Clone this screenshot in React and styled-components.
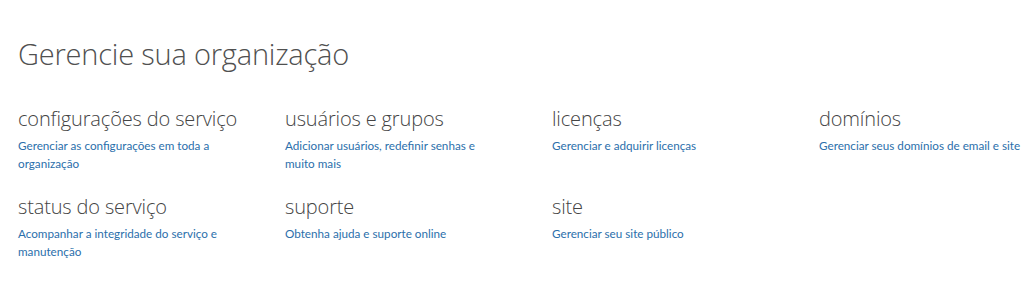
import styled, { createGlobalStyle } from 'styled-components'

const GlobalStyle = createGlobalStyle`
  body {
    margin: 0;
    background: #fff;
    font-family: 'Open Sans', 'Noto Sans', sans-serif;
  }
`

const Page = styled.div`
  padding: 34px 0 0 18px;
`

const Title = styled.h1`
  margin: 0 0 33px;
  font-size: 29px;
  font-weight: 300;
  line-height: 40px;
  color: #505050;
  letter-spacing: -0.2px;
`

const Grid = styled.div`
  display: grid;
  grid-template-columns: repeat(3, 267px) 1fr;
  row-gap: 23px;
`

const Item = styled.div`
  display: flex;
  flex-direction: column;
  min-width: 0;
`

const Heading = styled.h2`
  margin: 0;
  font-size: 20px;
  font-weight: 300;
  line-height: 24px;
  color: #444;
  letter-spacing: -0.15px;
`

const Link = styled.a`
  margin-top: 5px;
  max-width: 212px;
  font-family: 'Lato', 'Open Sans', sans-serif;
  font-size: 11.7px;
  line-height: 18px;
  color: #2b6fab;
  text-decoration: none;
  cursor: pointer;
`

const items = [
  ['configurações do serviço', 'Gerenciar as configurações em toda a organização'],
  ['usuários e grupos', 'Adicionar usuários, redefinir senhas e muito mais'],
  ['licenças', 'Gerenciar e adquirir licenças'],
  ['domínios', 'Gerenciar seus domínios de email e site'],
  ['status do serviço', 'Acompanhar a integridade do serviço e manutenção'],
  ['suporte', 'Obtenha ajuda e suporte online'],
  ['site', 'Gerenciar seu site público'],
]

export default function App() {
  return (
    <Page>
      <GlobalStyle />
      <Title>Gerencie sua organização</Title>
      <Grid>
        {items.map(([title, desc]) => (
          <Item key={title}>
            <Heading>{title}</Heading>
            <Link>{desc}</Link>
          </Item>
        ))}
      </Grid>
    </Page>
  )
}
